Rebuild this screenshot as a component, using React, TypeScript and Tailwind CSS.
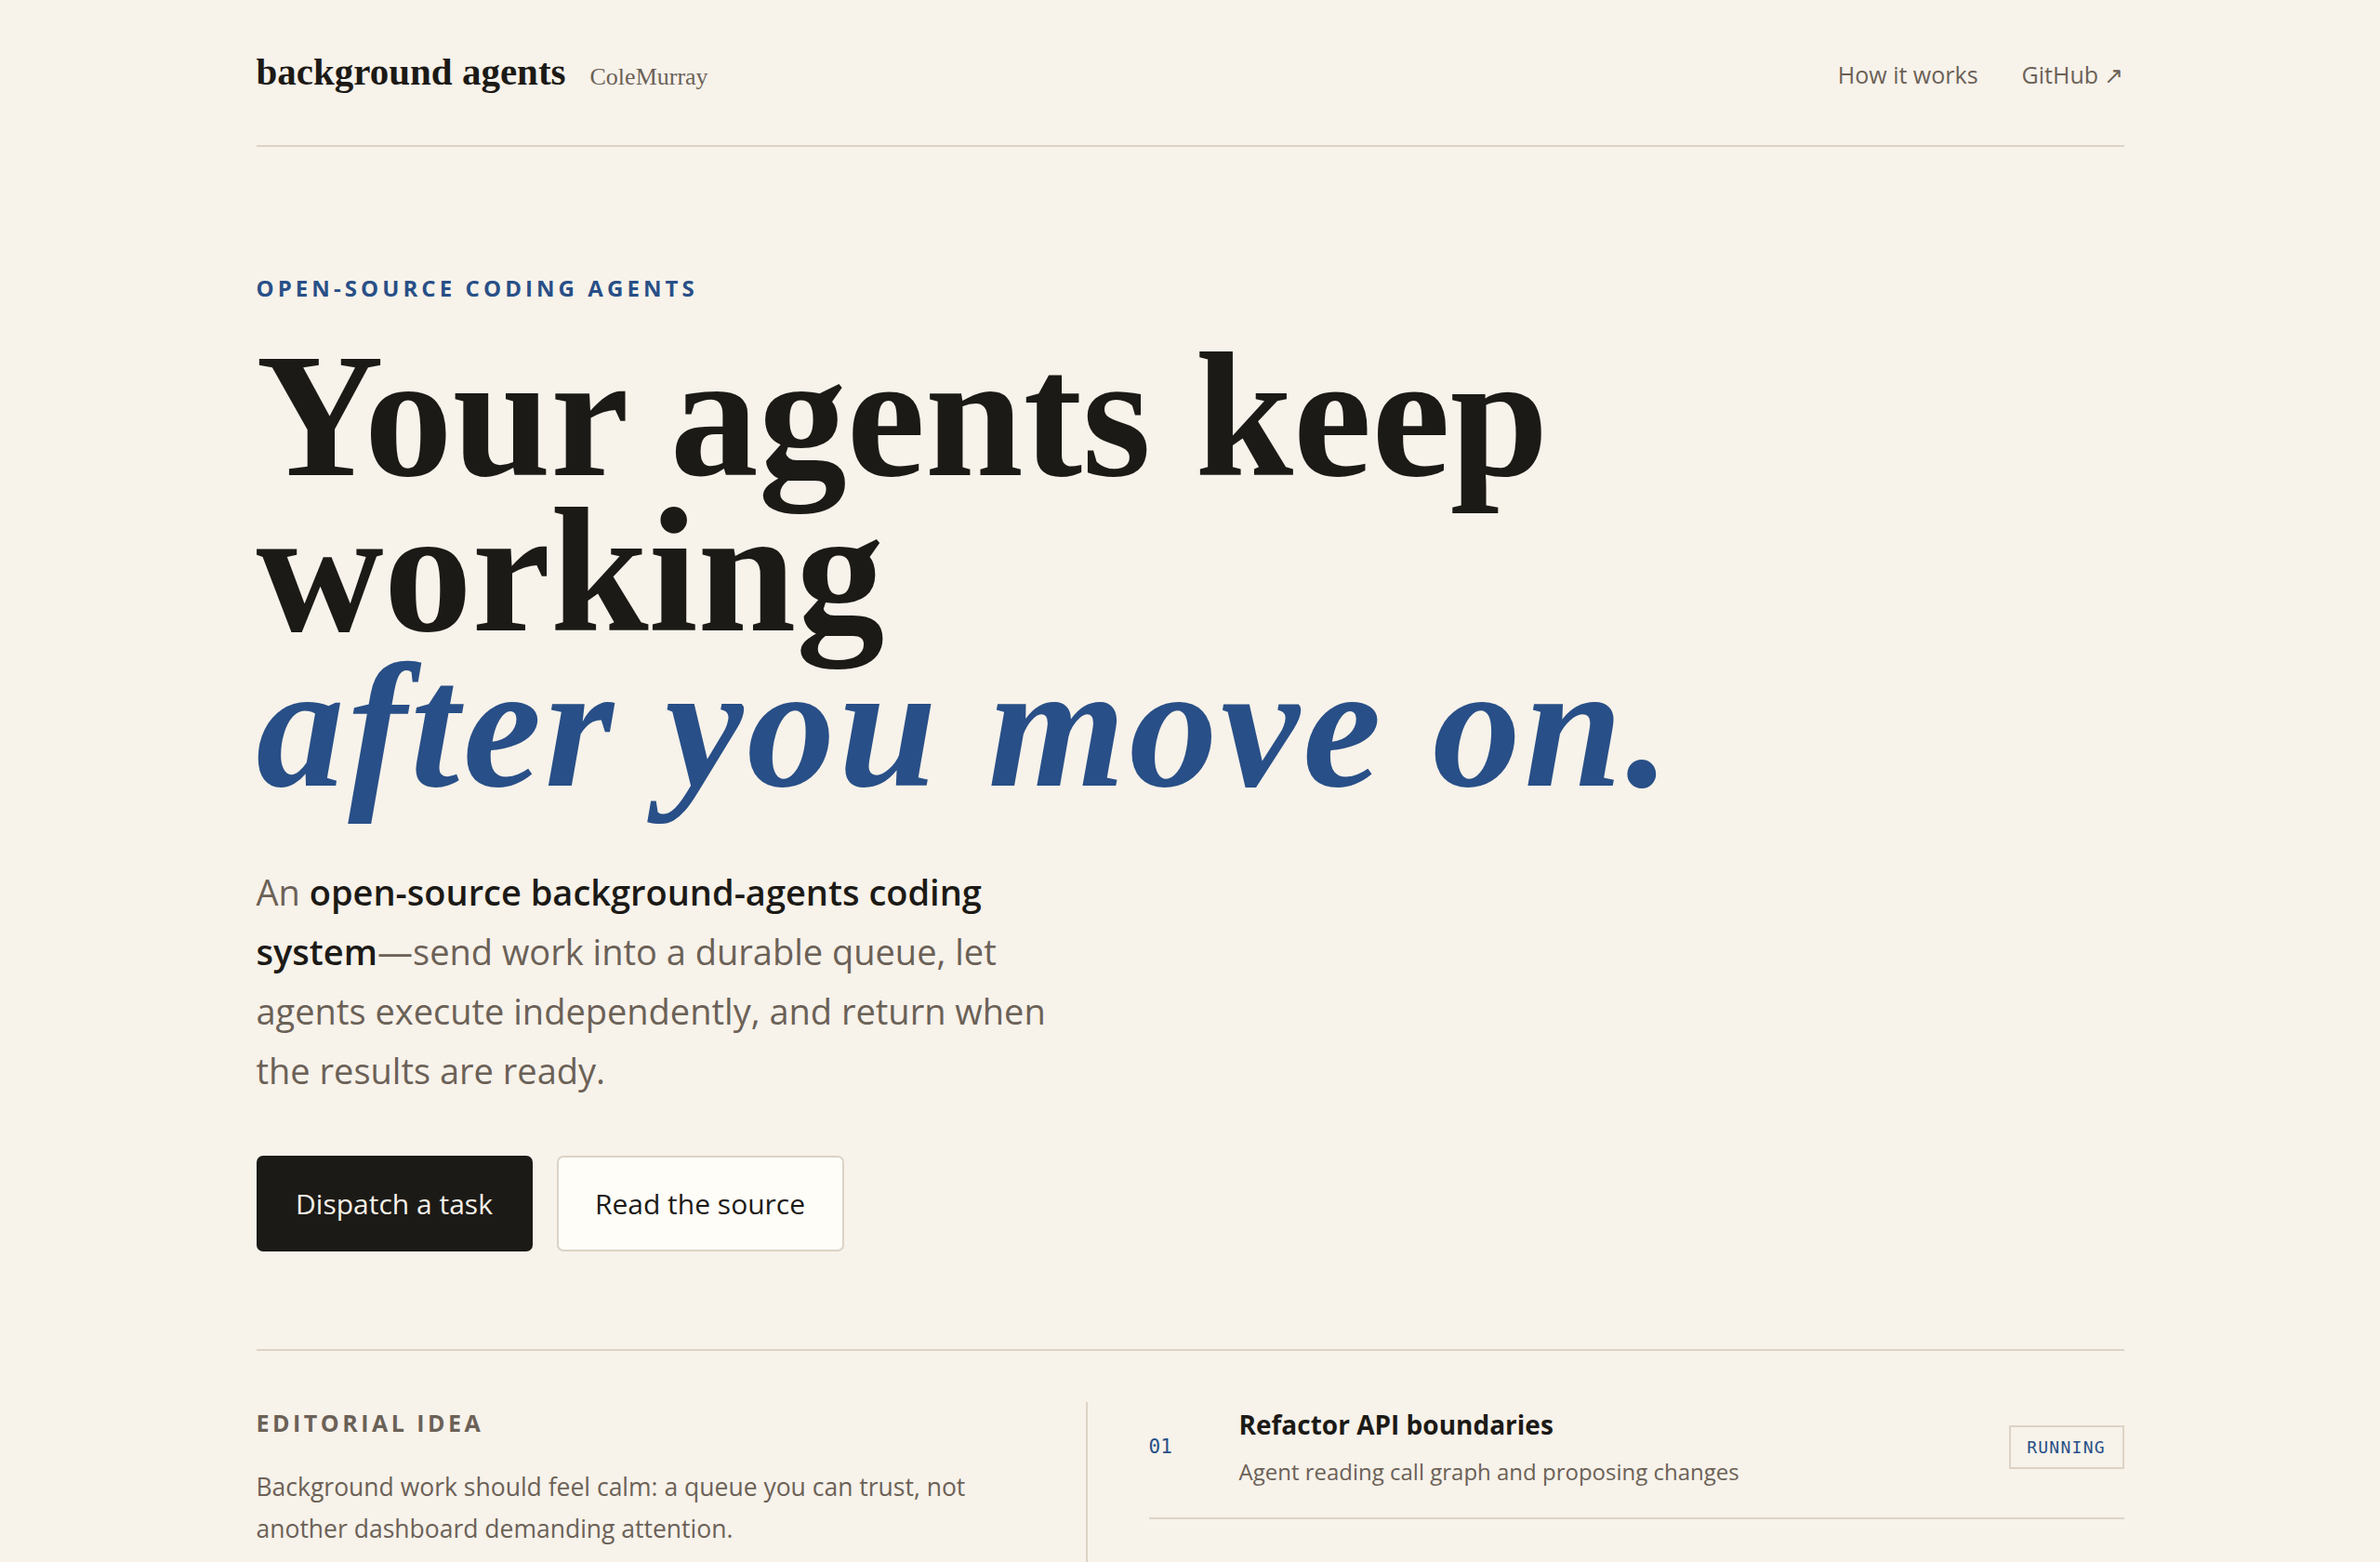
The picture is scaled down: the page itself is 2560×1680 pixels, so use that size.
import React from "react";

const serif = "font-['Liberation_Serif','Times_New_Roman',serif]";
const sans = "font-['Open_Sans','Noto_Sans',sans-serif]";
const mono = "font-['DejaVu_Sans_Mono','Liberation_Mono',monospace]";

function Row({ n, title, sub, status }: { n: string; title: string; sub: string; status: string }) {
  return (
    <div className="flex items-center border-b-2 border-[#dcd3c5] pt-[40px] pb-[32px] first:pt-[5px]">
      <div className={`${mono} w-[97px] shrink-0 text-[21px] text-[#284f87]`}>{n}</div>
      <div className="flex-1">
        <div className={`${sans} text-[28px] leading-[38px] font-bold text-[#1c1a16]`}>{title}</div>
        <div className={`${sans} mt-[15px] text-[24px] leading-[34px] text-[#6b6157]`}>{sub}</div>
      </div>
      <div
        className={`${mono} flex h-[47px] w-[124px] items-center justify-center border-2 border-[#dcd3c5] text-[18px] tracking-[0.07em] text-[#284f87]`}
      >
        {status}
      </div>
    </div>
  );
}

export default function App() {
  return (
    <div className="min-h-screen bg-[#f7f2ea] text-[#1c1a16]">
      <div className="mx-auto w-[2009px]">
        <header className="flex h-[158px] items-center justify-between border-b-2 border-[#dcd3c5]">
          <div className="flex items-baseline gap-[26px]">
            <span className={`${serif} text-[41px] font-bold text-[#1c1a16]`}>background agents</span>
            <span className={`${serif} text-[26px] text-[#6b6157]`}>ColeMurray</span>
          </div>
          <nav className={`${sans} mt-[6px] flex items-baseline gap-[47px] text-[25px] text-[#6b6157]`}>
            <a>How it works</a>
            <a>GitHub ↗</a>
          </nav>
        </header>

        <section className="pt-[136px] pb-[105px]">
          <div className={`${sans} text-[24px] leading-[32px] font-bold tracking-[0.17em] text-[#284f87]`}>
            OPEN-SOURCE CODING AGENTS
          </div>
          <h1 className={`${serif} mt-[38px] text-[190px] leading-[167px] font-bold text-[#1c1a16]`}>
            Your agents keep
            <br />
            working
            <br />
            <em className="tracking-[0.02em] text-[#284f87]">after you move on.</em>
          </h1>
          <p className={`${sans} mt-[62px] max-w-[870px] text-[38px] leading-[64px] text-[#6b6157]`}>
            An <strong className="font-semibold text-[#1c1a16]">open-source background-agents coding system</strong>
            —send work into a durable queue, let agents execute independently, and return when the results are ready.
          </p>
          <div className={`${sans} mt-[60px] flex gap-[26px] text-[30px]`}>
            <button className="h-[103px] w-[297px] rounded-[7px] bg-[#1c1a16] text-[#f7f2ea]">Dispatch a task</button>
            <button className="h-[103px] w-[309px] rounded-[7px] border-2 border-[#dcd3c5] bg-[#fffdf8] text-[#1c1a16]">
              Read the source
            </button>
          </div>
        </section>

        <section className="flex border-t-2 border-[#dcd3c5] pt-[55px]">
          <div className="w-[892px] shrink-0 pt-[5px] pr-[60px]">
            <div className={`${sans} text-[25px] leading-[34px] font-bold tracking-[0.14em] text-[#6b6157]`}>
              EDITORIAL IDEA
            </div>
            <p className={`${sans} mt-[30px] max-w-[800px] text-[26.5px] leading-[45px] text-[#6b6157]`}>
              Background work should feel calm: a queue you can trust, not another dashboard demanding attention.
            </p>
          </div>
          <div className="flex-1 border-l-2 border-[#dcd3c5] pl-[66px]">
            <Row
              n="01"
              title="Refactor API boundaries"
              sub="Agent reading call graph and proposing changes"
              status="RUNNING"
            />
            <Row n="02" title="Audit billing webhooks" sub="Queued behind the current task" status="QUEUED" />
            <Row n="03" title="Update dependency locks" sub="Results ready for review" status="DONE" />
          </div>
        </section>
      </div>
    </div>
  );
}
